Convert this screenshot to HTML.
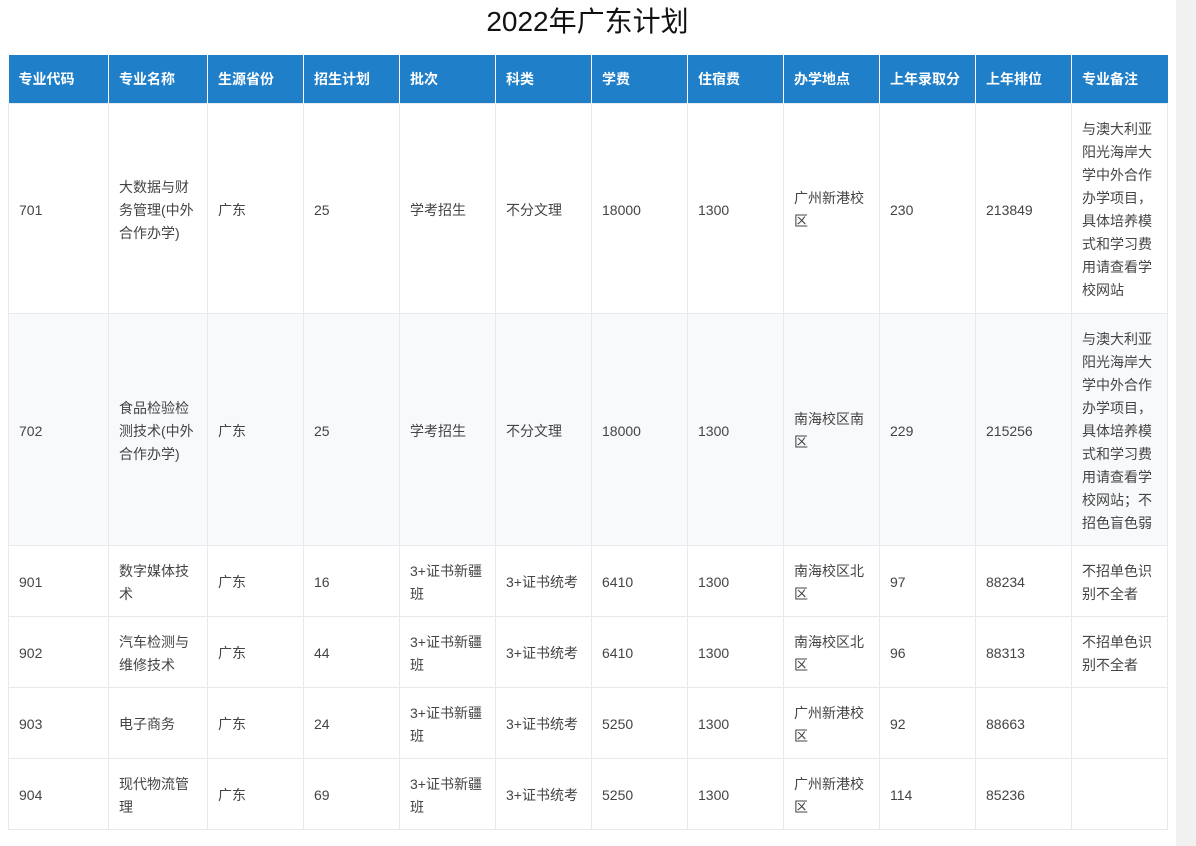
<!DOCTYPE html>
<html><head><meta charset="utf-8"><style>
body{margin:0;background:#fff;font-family:"Liberation Sans","Noto Sans CJK SC",sans-serif;width:1196px;height:846px;overflow:hidden;position:relative}
h1{margin:0;position:absolute;top:2px;left:0;width:1175px;text-align:center;font-weight:normal;font-size:28px;line-height:40px;color:#111}
table{position:absolute;left:8px;top:55px;border-collapse:collapse;table-layout:fixed;width:1160px}
th{background:#1f7fc9;color:#fff;font-size:14px;font-weight:bold;text-align:left;padding:0 10px;height:48px;border-left:1px solid #fff;box-sizing:border-box}
th:first-child{border-left:none}
td{font-size:14px;color:#444;line-height:23px;padding:4px 10px 0;border:1px solid #e8e8ee;vertical-align:middle}
tr.g td{background:#f8f9fb}
.sb{position:absolute;left:1176px;top:0;width:20px;height:846px;background:#f1f1f1}
</style></head><body>
<h1>2022年广东计划</h1>
<table>
<colgroup><col style="width:100px"><col style="width:99px"><col style="width:96px"><col style="width:96px"><col style="width:96px"><col style="width:96px"><col style="width:96px"><col style="width:96px"><col style="width:96px"><col style="width:96px"><col style="width:96px"><col style="width:96px"></colgroup>
<tr><th>专业代码</th><th>专业名称</th><th>生源省份</th><th>招生计划</th><th>批次</th><th>科类</th><th>学费</th><th>住宿费</th><th>办学地点</th><th>上年录取分</th><th>上年排位</th><th>专业备注</th></tr>
<tr style="height:210px"><td>701</td><td>大数据与财务管理(中外合作办学)</td><td>广东</td><td>25</td><td>学考招生</td><td>不分文理</td><td>18000</td><td>1300</td><td>广州新港校区</td><td>230</td><td>213849</td><td>与澳大利亚阳光海岸大学中外合作办学项目，具体培养模式和学习费用请查看学校网站</td></tr>
<tr class="g" style="height:232px"><td>702</td><td>食品检验检测技术(中外合作办学)</td><td>广东</td><td>25</td><td>学考招生</td><td>不分文理</td><td>18000</td><td>1300</td><td>南海校区南区</td><td>229</td><td>215256</td><td>与澳大利亚阳光海岸大学中外合作办学项目，具体培养模式和学习费用请查看学校网站；不招色盲色弱</td></tr>
<tr style="height:71px"><td>901</td><td>数字媒体技术</td><td>广东</td><td>16</td><td>3+证书新疆班</td><td>3+证书统考</td><td>6410</td><td>1300</td><td>南海校区北区</td><td>97</td><td>88234</td><td>不招单色识别不全者</td></tr>
<tr style="height:71px"><td>902</td><td>汽车检测与维修技术</td><td>广东</td><td>44</td><td>3+证书新疆班</td><td>3+证书统考</td><td>6410</td><td>1300</td><td>南海校区北区</td><td>96</td><td>88313</td><td>不招单色识别不全者</td></tr>
<tr style="height:71px"><td>903</td><td>电子商务</td><td>广东</td><td>24</td><td>3+证书新疆班</td><td>3+证书统考</td><td>5250</td><td>1300</td><td>广州新港校区</td><td>92</td><td>88663</td><td></td></tr>
<tr style="height:71px"><td>904</td><td>现代物流管理</td><td>广东</td><td>69</td><td>3+证书新疆班</td><td>3+证书统考</td><td>5250</td><td>1300</td><td>广州新港校区</td><td>114</td><td>85236</td><td></td></tr>
</table>
<div class="sb"></div>
</body></html>
